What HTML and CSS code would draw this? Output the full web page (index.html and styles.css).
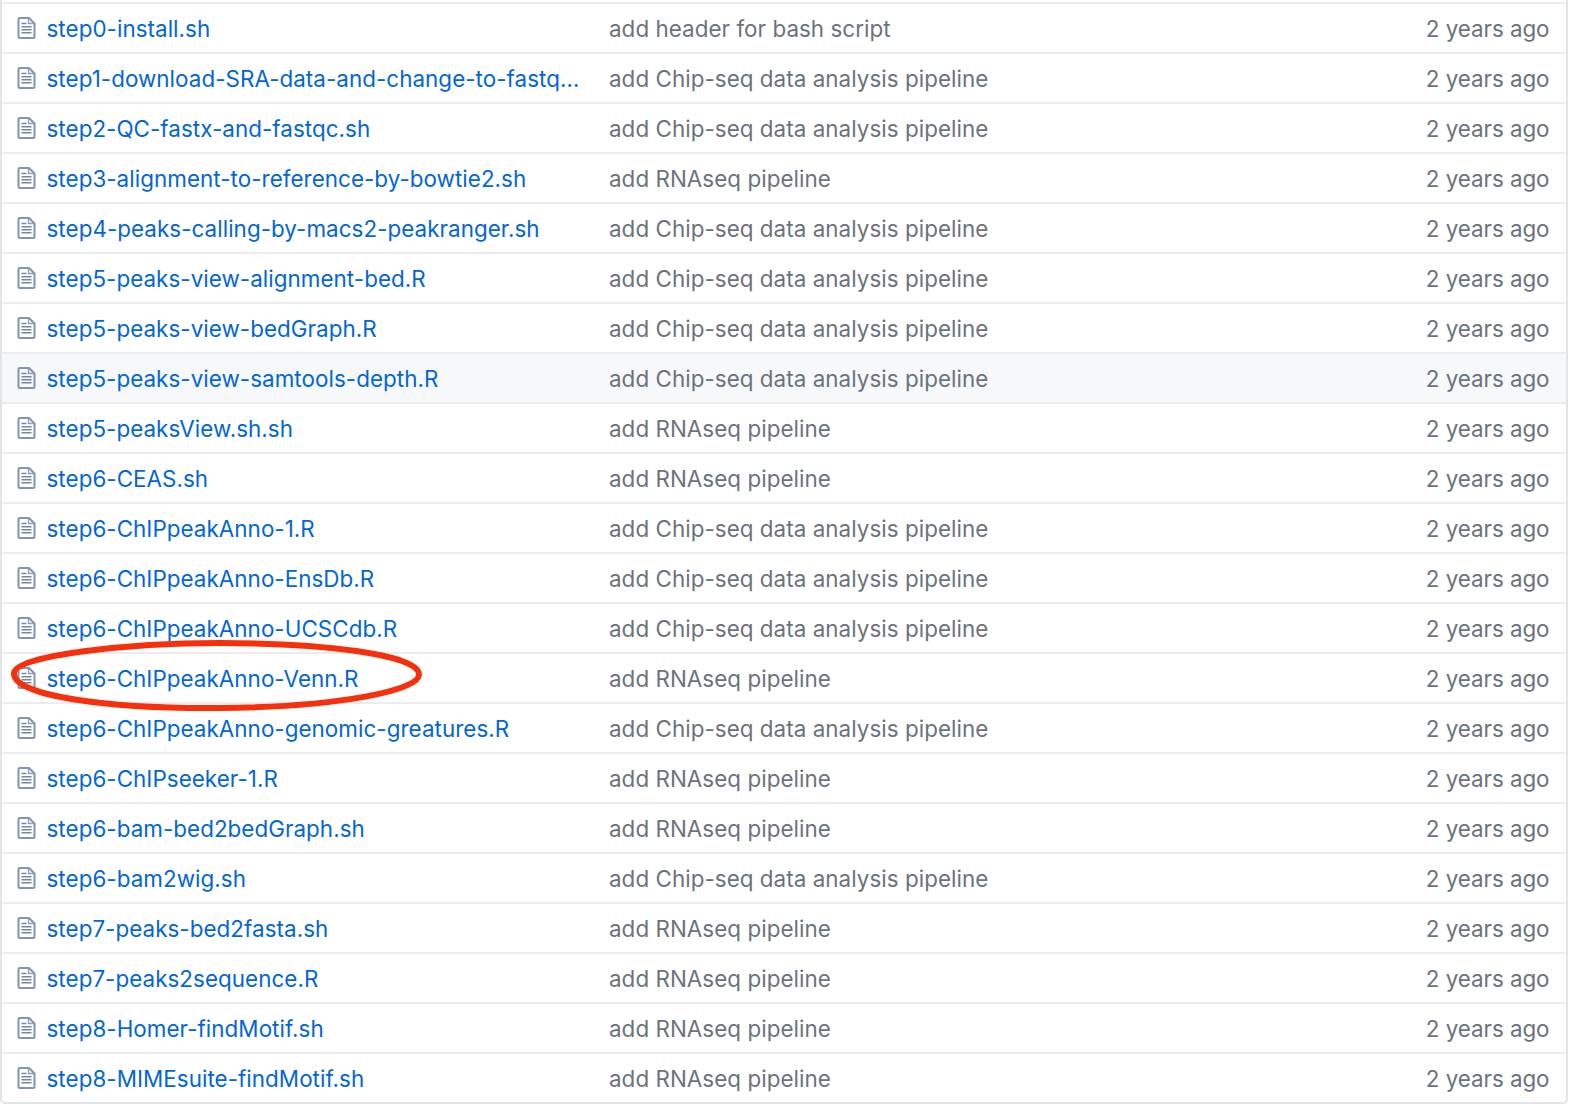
FILE: index.html
```html
<!DOCTYPE html>
<html lang="en">
<head>
    <meta charset="UTF-8">
    <title>Files</title>
    <link rel="stylesheet" href="styles.css">
</head>
<body>
    <svg class="defs" width="0" height="0">
        <symbol id="file-icon" viewBox="0 0 18 22">
            <path d="M1 2.2C1 1.5 1.5 1 2.2 1H11.5L17 6.5V19.8C17 20.5 16.5 21 15.8 21H2.2C1.5 21 1 20.5 1 19.8Z" fill="none" stroke="#7f95b3" stroke-width="2"/>
            <path d="M11 1.5V6.5H16.5" fill="none" stroke="#8c9fb8" stroke-width="1.4"/>
            <path d="M4 6.5H9M4 9.7H14M4 12.7H14M4 15.7H14" fill="none" stroke="#76879c" stroke-width="1.5"/>
        </symbol>
    </svg>
    <div class="file-wrap">
        <div class="files">
            <div class="row"><svg class="icon"><use href="#file-icon"/></svg><a class="name">step0-install.sh</a><span class="msg">add header for bash script</span><span class="age">2 years ago</span></div>
            <div class="row"><svg class="icon"><use href="#file-icon"/></svg><a class="name">step1-download-SRA-data-and-change-to-fastq.sh</a><span class="msg">add Chip-seq data analysis pipeline</span><span class="age">2 years ago</span></div>
            <div class="row"><svg class="icon"><use href="#file-icon"/></svg><a class="name">step2-QC-fastx-and-fastqc.sh</a><span class="msg">add Chip-seq data analysis pipeline</span><span class="age">2 years ago</span></div>
            <div class="row"><svg class="icon"><use href="#file-icon"/></svg><a class="name">step3-alignment-to-reference-by-bowtie2.sh</a><span class="msg">add RNAseq pipeline</span><span class="age">2 years ago</span></div>
            <div class="row"><svg class="icon"><use href="#file-icon"/></svg><a class="name">step4-peaks-calling-by-macs2-peakranger.sh</a><span class="msg">add Chip-seq data analysis pipeline</span><span class="age">2 years ago</span></div>
            <div class="row"><svg class="icon"><use href="#file-icon"/></svg><a class="name">step5-peaks-view-alignment-bed.R</a><span class="msg">add Chip-seq data analysis pipeline</span><span class="age">2 years ago</span></div>
            <div class="row"><svg class="icon"><use href="#file-icon"/></svg><a class="name">step5-peaks-view-bedGraph.R</a><span class="msg">add Chip-seq data analysis pipeline</span><span class="age">2 years ago</span></div>
            <div class="row hover"><svg class="icon"><use href="#file-icon"/></svg><a class="name">step5-peaks-view-samtools-depth.R</a><span class="msg">add Chip-seq data analysis pipeline</span><span class="age">2 years ago</span></div>
            <div class="row"><svg class="icon"><use href="#file-icon"/></svg><a class="name">step5-peaksView.sh.sh</a><span class="msg">add RNAseq pipeline</span><span class="age">2 years ago</span></div>
            <div class="row"><svg class="icon"><use href="#file-icon"/></svg><a class="name">step6-CEAS.sh</a><span class="msg">add RNAseq pipeline</span><span class="age">2 years ago</span></div>
            <div class="row"><svg class="icon"><use href="#file-icon"/></svg><a class="name">step6-ChIPpeakAnno-1.R</a><span class="msg">add Chip-seq data analysis pipeline</span><span class="age">2 years ago</span></div>
            <div class="row"><svg class="icon"><use href="#file-icon"/></svg><a class="name">step6-ChIPpeakAnno-EnsDb.R</a><span class="msg">add Chip-seq data analysis pipeline</span><span class="age">2 years ago</span></div>
            <div class="row"><svg class="icon"><use href="#file-icon"/></svg><a class="name">step6-ChIPpeakAnno-UCSCdb.R</a><span class="msg">add Chip-seq data analysis pipeline</span><span class="age">2 years ago</span></div>
            <div class="row"><svg class="icon"><use href="#file-icon"/></svg><a class="name">step6-ChIPpeakAnno-Venn.R</a><span class="msg">add RNAseq pipeline</span><span class="age">2 years ago</span></div>
            <div class="row"><svg class="icon"><use href="#file-icon"/></svg><a class="name">step6-ChIPpeakAnno-genomic-greatures.R</a><span class="msg">add Chip-seq data analysis pipeline</span><span class="age">2 years ago</span></div>
            <div class="row"><svg class="icon"><use href="#file-icon"/></svg><a class="name">step6-ChIPseeker-1.R</a><span class="msg">add RNAseq pipeline</span><span class="age">2 years ago</span></div>
            <div class="row"><svg class="icon"><use href="#file-icon"/></svg><a class="name">step6-bam-bed2bedGraph.sh</a><span class="msg">add RNAseq pipeline</span><span class="age">2 years ago</span></div>
            <div class="row"><svg class="icon"><use href="#file-icon"/></svg><a class="name">step6-bam2wig.sh</a><span class="msg">add Chip-seq data analysis pipeline</span><span class="age">2 years ago</span></div>
            <div class="row"><svg class="icon"><use href="#file-icon"/></svg><a class="name">step7-peaks-bed2fasta.sh</a><span class="msg">add RNAseq pipeline</span><span class="age">2 years ago</span></div>
            <div class="row"><svg class="icon"><use href="#file-icon"/></svg><a class="name">step7-peaks2sequence.R</a><span class="msg">add RNAseq pipeline</span><span class="age">2 years ago</span></div>
            <div class="row"><svg class="icon"><use href="#file-icon"/></svg><a class="name">step8-Homer-findMotif.sh</a><span class="msg">add RNAseq pipeline</span><span class="age">2 years ago</span></div>
            <div class="row"><svg class="icon"><use href="#file-icon"/></svg><a class="name">step8-MIMEsuite-findMotif.sh</a><span class="msg">add RNAseq pipeline</span><span class="age">2 years ago</span></div>
        </div>
        <!-- red marker drawn over the Venn row -->
        <svg class="circle" viewBox="0 0 440 80" width="440" height="80">
            <path d="M14 37C16 19 130 7 220 7C320 7 417 18 419 38C421 54 340 71 220 72C110 73 12 60 14 37Z" fill="none" stroke="#f6300d" stroke-width="6"/>
        </svg>
    </div>
</body>
</html>
```

FILE: styles.css
```css
body {
    margin: 0;
    background: #fff;
    font-family: 'Inter', sans-serif;
    font-size: 22.4px;
    overflow: hidden;
}
.defs {
    position: absolute;
}
.file-wrap {
    position: relative;
    width: 1568px;
    height: 1104px;
}
.files {
    border: 2px solid #e1e4e8;
    border-top: none;
    border-radius: 0 0 5px 5px;
    padding-top: 2px;
    box-sizing: border-box;
    height: 1104px;
}
.row {
    display: flex;
    align-items: center;
    height: 48px;
    border-top: 2px solid #eaecef;
    padding-right: 16.5px;
}
.row.hover {
    background: #f6f8fa;
}
.icon {
    width: 19px;
    height: 22px;
    margin-left: 15px;
    flex: none;
}
.name {
    width: 538px;
    margin-left: 10.5px;
    margin-right: 24.5px;
    color: #0366d6;
    letter-spacing: 0.05px;
    flex: none;
    white-space: nowrap;
    overflow: hidden;
    text-overflow: ellipsis;
}
.msg {
    flex: 1;
    color: #6a737d;
    letter-spacing: 0.05px;
}
.age {
    color: #6a737d;
    letter-spacing: -0.05px;
}
.circle {
    position: absolute;
    left: 0;
    top: 636px;
}
```
